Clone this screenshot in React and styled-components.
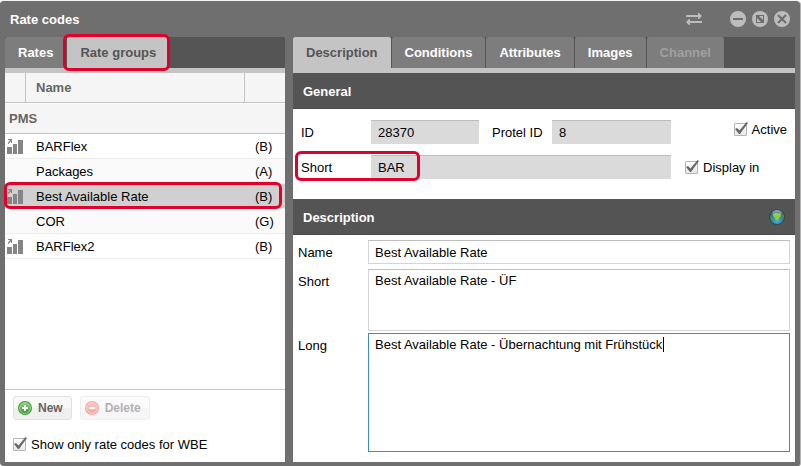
import React, { useEffect, useLayoutEffect, useRef, useState } from 'react'
import styled, { createGlobalStyle, css } from 'styled-components'

const groups = [
  { name: 'BARFlex', type: 'B', chart: true },
  { name: 'Packages', type: 'A' },
  { name: 'Best Available Rate', type: 'B', chart: true, marked: true },
  { name: 'COR', type: 'G' },
  { name: 'BARFlex2', type: 'B', chart: true }
]

const detailTabs = [
  { title: 'Description' },
  { title: 'Conditions' },
  { title: 'Attributes' },
  { title: 'Images' },
  { title: 'Channel', disabled: true }
]

const GlobalStyle = createGlobalStyle`
  *, *::before, *::after {
    box-sizing: border-box;
  }

  body {
    margin: 0;
    background: #fff;
    color: #000;
    font: 13px/19px "Liberation Sans", Arial, sans-serif;
  }

  button, input, textarea {
    font: inherit;
    color: inherit;
  }
`

/* red frame drawn over an element */
const markerFrame = css`
  content: '';
  position: absolute;
  border: 3px solid #e2002b;
  border-radius: 6px;
  pointer-events: none;
  z-index: 1;
`

const Window = styled.main`
  display: flex;
  flex-direction: column;
  min-height: 100vh;
  padding: 0 5px 4px;
  border-top: 1px solid #f4f4f4;
  border-right: 1px solid #b4b4b4;
  border-radius: 4px 5px 3px 4px;
  background: #6f6f6f;
`

const TitleBar = styled.header`
  display: flex;
  align-items: center;
  height: 36px;
  padding: 0 5px;
`

const Title = styled.h1`
  flex: 1;
  margin: 0;
  color: #fff;
  font-size: 13px;
`

const WindowButtons = styled.div`
  display: flex;
  align-items: center;
  gap: 6px;
`

const IconButton = styled.button`
  display: flex;
  padding: 0;
  border: 0;
  background: none;
  margin-right: ${({ $spaced }) => ($spaced ? '22px' : '0')};
`

const Columns = styled.div`
  flex: 1;
  display: grid;
  grid-template-columns: minmax(240px, 280fr) minmax(440px, 502fr);
  gap: 8px;
`

const Panel = styled.section`
  display: flex;
  flex-direction: column;
  background: #fff;
`

const Tabs = styled.div`
  display: flex;
  gap: 1px;
  height: 36px;
  border-bottom: 5px solid #c4c4c4;
  background: #555;
`

const Tab = styled.button`
  padding: 0 13px;
  border: 0;
  border-radius: 2px 2px 0 0;
  background: ${({ $active }) => ($active ? '#c4c4c4' : '#7d7d7d')};
  color: ${({ $active }) => ($active ? '#555' : '#fff')};
  font-weight: bold;

  &:disabled {
    color: #a0a0a0;
  }

  ${({ $marked }) => $marked && css`
    position: relative;

    &::after {
      ${markerFrame}
      inset: -3px -1px -3px -4px;
    }
  `}
`

const ListArea = styled.div`
  flex: 1;
`

const Table = styled.table`
  width: 100%;
  border-collapse: separate;
  border-spacing: 0;
  table-layout: fixed;
`

const HeadCell = styled.th`
  width: ${({ $width }) => $width || 'auto'};
  height: 30px;
  padding: 0 10px;
  border-right: ${({ $last }) => ($last ? '0' : '1px solid #c4c4c4')};
  border-bottom: 1px solid #c4c4c4;
  background: #f5f5f5;
  color: #666;
  text-align: left;
`

const GroupCell = styled.th`
  height: 31px;
  padding: 0 4px;
  border-top: 1px solid #fff;
  border-bottom: 1px solid #c4c4c4;
  background: #f5f5f5;
  color: #666;
  text-align: left;
`

const Cell = styled.td`
  height: 25px;
  padding: ${({ $icon }) => ($icon ? '0 2px' : '1px 10px 0')};
  border-bottom: 1px solid #ededed;
  white-space: nowrap;

  svg {
    display: block;
  }
`

const Row = styled.tr`
  background: ${({ $selected }) => ($selected ? '#d0d0d0' : '#fff')};

  &:nth-child(odd) {
    background: ${({ $selected }) => ($selected ? '#d0d0d0' : '#fafafa')};
  }

  ${({ $marked }) => $marked && css`
    position: relative;

    ${Cell}:first-child::after {
      ${markerFrame}
      inset: -2px 3px 0 -1px;
    }
  `}
`

const ListFooter = styled.footer`
  padding: 6px 8px 8px;
  border-top: 1px solid #c4c4c4;
`

const Toolbar = styled.div`
  display: flex;
  gap: 8px;
  margin-bottom: 15px;
`

const ToolButton = styled.button`
  display: flex;
  align-items: center;
  gap: 6px;
  height: 24px;
  padding: 0 8px 0 4px;
  border: 1px solid #e0e0e0;
  border-radius: 3px;
  background: linear-gradient(#f8f8f8 50%, #efefef 50%);
  color: #666;
  font-size: 12px;
  font-weight: bold;

  &:disabled {
    opacity: 0.5;
  }
`

const CheckLabel = styled.label`
  display: flex;
  align-items: center;
  gap: 5px;
`

const CheckWrap = styled.span`
  position: relative;
  display: flex;

  svg {
    position: absolute;
    top: -1px;
    left: 0;
    display: none;
    pointer-events: none;
  }

  input:checked + svg {
    display: block;
  }
`

const CheckInput = styled.input`
  appearance: none;
  width: 13px;
  height: 13px;
  margin: 0;
  border: 1px solid #b5b5b5;
  border-radius: 1px;
  background: linear-gradient(#fff, #e8e8e8);
`

const SectionBar = styled.h2`
  display: flex;
  align-items: center;
  justify-content: space-between;
  height: 36px;
  margin: 0;
  padding: 0 10px;
  background: #545454;
  box-shadow: inset 0 -1px #4a4a4a;
  color: #fff;
  font-size: 13px;
`

const GeneralForm = styled.div`
  display: grid;
  grid-template-columns: 70px minmax(0, 108fr) 73px minmax(0, 119fr) 124px;
  row-gap: 11px;
  padding: 11px 0 20px 8px;
`

const GeneralLabel = styled.label`
  height: 24px;
  line-height: 25px;
  padding-left: ${({ $indent }) => ($indent ? '13px' : '0')};

  ${({ $marked }) => $marked && css`
    position: relative;

    &::after {
      ${markerFrame}
      inset: -4px -49px -2px -6px;
    }
  `}
`

const ReadOnlyInput = styled.input`
  grid-column: ${({ $wide }) => ($wide ? 'span 3' : 'auto')};
  width: 100%;
  height: 24px;
  padding: 0 7px;
  border: 0;
  border-top: 1px solid #bdbdbd;
  border-radius: 0;
  background: #dadada;
  outline: 0;
`

const CheckCell = styled.div`
  justify-self: ${({ $end }) => ($end ? 'end' : 'start')};
  align-self: ${({ $end }) => ($end ? 'start' : 'center')};
  padding: 0 8px 0 14px;
`

const TextForm = styled.div`
  flex: 1;
  display: grid;
  grid-template-columns: 70px 1fr;
  grid-template-rows: 29px 64px 1fr;
  padding: 5px 5px 10px;
`

const TextLabel = styled.label`
  line-height: 25px;
`

const field = css`
  display: block;
  width: 100%;
  border: 1px solid #d5d5d5;
  border-top-color: #bdbdbd;
  border-radius: 0;
  background: #fff;
  outline: 0;

  &:focus {
    border-color: #3b8bc4;
  }
`

const TextInput = styled.input`
  ${field}
  height: 24px;
  padding: 0 6px;
`

const TextArea = styled.textarea`
  ${field}
  height: ${({ $tall }) => ($tall ? '100%' : '62px')};
  min-height: ${({ $tall }) => ($tall ? '119px' : '0')};
  padding: 1px 6px;
  resize: none;
  caret-color: ${({ $ownCaret }) => ($ownCaret ? 'transparent' : 'auto')};
`

const AreaWrap = styled.div`
  position: relative;
`

const Caret = styled.span`
  position: absolute;
  top: 4px;
  width: 1px;
  height: 15px;
  background: #000;
`

const ChartIcon = () => (
  <svg width="16" height="15" viewBox="0 0 16 15" fill="#858585" aria-hidden="true">
    <path d="M0 8h5v7H0zM6 5h4v10H6zM11 1h5v14h-5z" />
    <path d="M1 0h4v4H4V2.200L1.600 5 .6 4.200 3 1H1z" />
  </svg>
)

const SwapIcon = () => (
  <svg width="16" height="12" viewBox="0 0 16 12" fill="#bcbcbc" aria-hidden="true">
    <path d="M0 2h12V0h1l3 3-3 3h-1V4H0zM16 8H4V6H3L0 9l3 3h1v-2h12z" />
  </svg>
)

const RoundIcon = ({ children }) => (
  <svg width="16" height="16" viewBox="0 0 16 16" fill="none" stroke="#6c6c6c" strokeWidth="2" aria-hidden="true">
    <circle cx="8" cy="8" r="8" fill="#bcbcbc" stroke="none" />
    {children}
  </svg>
)

const CircleIcon = ({ id, light, dark, plus }) => (
  <svg width="14" height="14" viewBox="0 0 14 14" aria-hidden="true">
    <defs>
      <linearGradient id={id} x1="0" y1="0" x2="0" y2="1">
        <stop offset="0" stopColor={light} />
        <stop offset="1" stopColor={dark} />
      </linearGradient>
    </defs>
    <circle cx="7" cy="7" r="7" fill={dark} />
    <circle cx="7" cy="7" r="5.500" fill={`url(#${id})`} stroke="#fff" strokeOpacity="0.45" />
    <path d={plus ? 'M7 4v6M4 7h6' : 'M4 7h6'} stroke="#fff" strokeWidth="2" />
  </svg>
)

const GlobeIcon = () => (
  <svg width="16" height="16" viewBox="0 0 16 16" aria-hidden="true">
    <defs>
      <radialGradient id="sea" cx="0.5" cy="0.75" r="0.7">
        <stop offset="0" stopColor="#48b0dc" />
        <stop offset="0.6" stopColor="#2f7f9e" />
        <stop offset="1" stopColor="#2f555a" />
      </radialGradient>
      <linearGradient id="shine" x1="0" y1="0" x2="0" y2="1">
        <stop offset="0" stopColor="#fff" stopOpacity="0.5" />
        <stop offset="1" stopColor="#fff" stopOpacity="0" />
      </linearGradient>
    </defs>
    <circle cx="8" cy="8" r="7.500" fill="url(#sea)" stroke="#35484a" />
    <path d="M4 5l3-1 2 1 2-1 1 3-2 2-1 3-2-1-1-2-2-2z" fill="#93c83a" />
    <path d="M1 7l2 1 1 3-1 1zM13 4l2 3-1 3-1-2z" fill="#4f9140" />
    <ellipse cx="8" cy="4" rx="5" ry="3" fill="url(#shine)" />
  </svg>
)

const CheckBox = ({ id, children }) => (
  <CheckLabel htmlFor={id}>
    <CheckWrap>
      <CheckInput type="checkbox" id={id} defaultChecked />
      <svg width="15" height="14" viewBox="0 0 15 14" fill="#686868" aria-hidden="true">
        <path d="M1 7l2-1 2.500 2.500L12.500 0 14 1 6 12H5z" />
      </svg>
    </CheckWrap>
    {children}
  </CheckLabel>
)

const LongText = () => {
  const [text, setText] = useState('Best Available Rate - Übernachtung mit Frühstück')
  const [caretX, setCaretX] = useState(0)
  const area = useRef(null)

  useLayoutEffect(() => {
    const ctx = document.createElement('canvas').getContext('2d')
    ctx.font = window.getComputedStyle(area.current).font
    setCaretX(Math.round(ctx.measureText(text).width) + 7)
  }, [text])

  useEffect(() => {
    area.current.focus()
    area.current.setSelectionRange(text.length, text.length)
  }, [])

  return (
    <AreaWrap>
      <TextArea id="long" ref={area} value={text} onChange={(e) => setText(e.target.value)} spellCheck={false} $tall $ownCaret />
      <Caret style={{ left: caretX }} />
    </AreaWrap>
  )
}

const RateList = () => {
  const [selected, setSelected] = useState('Best Available Rate')

  return (
    <Panel>
      <Tabs role="tablist">
        <Tab role="tab">Rates</Tab>
        <Tab role="tab" aria-selected="true" $active $marked>Rate groups</Tab>
      </Tabs>
      <ListArea>
        <Table>
          <thead>
            <tr>
              <HeadCell $width="20px" />
              <HeadCell>Name</HeadCell>
              <HeadCell $width="40px" $last />
            </tr>
          </thead>
          <tbody>
            <tr>
              <GroupCell colSpan={3}>PMS</GroupCell>
            </tr>
            {
              groups.map((g) => (
                <Row key={g.name} $selected={g.name === selected} $marked={g.marked} onClick={() => setSelected(g.name)}>
                  <Cell $icon>{g.chart ? <ChartIcon /> : null}</Cell>
                  <Cell>{g.name}</Cell>
                  <Cell>({g.type})</Cell>
                </Row>
              ))
            }
          </tbody>
        </Table>
      </ListArea>
      <ListFooter>
        <Toolbar>
          <ToolButton type="button">
            <CircleIcon id="plus" light="#8fd07f" dark="#3c9a34" plus />
            New
          </ToolButton>
          <ToolButton type="button" disabled>
            <CircleIcon id="minus" light="#ff8f80" dark="#e8504a" />
            Delete
          </ToolButton>
        </Toolbar>
        <CheckBox id="wbe">Show only rate codes for WBE</CheckBox>
      </ListFooter>
    </Panel>
  )
}

const RateDetails = () => {
  const [tab, setTab] = useState('Description')

  return (
    <Panel>
      <Tabs role="tablist">
        {
          detailTabs.map((t) => (
            <Tab key={t.title} role="tab" disabled={t.disabled} $active={t.title === tab} onClick={() => setTab(t.title)}>
              {t.title}
            </Tab>
          ))
        }
      </Tabs>
      <SectionBar>General</SectionBar>
      <GeneralForm>
        <GeneralLabel htmlFor="rate-id">ID</GeneralLabel>
        <ReadOnlyInput id="rate-id" readOnly value="28370" />
        <GeneralLabel htmlFor="protel-id" $indent>Protel ID</GeneralLabel>
        <ReadOnlyInput id="protel-id" readOnly value="8" />
        <CheckCell $end><CheckBox id="active">Active</CheckBox></CheckCell>
        <GeneralLabel htmlFor="code" $marked>Short</GeneralLabel>
        <ReadOnlyInput id="code" readOnly value="BAR" $wide />
        <CheckCell><CheckBox id="display">Display in</CheckBox></CheckCell>
      </GeneralForm>
      <SectionBar>
        Description
        <IconButton type="button" aria-label="Languages"><GlobeIcon /></IconButton>
      </SectionBar>
      <TextForm>
        <TextLabel htmlFor="name">Name</TextLabel>
        <TextInput id="name" defaultValue="Best Available Rate" />
        <TextLabel htmlFor="short">Short</TextLabel>
        <TextArea id="short" defaultValue="Best Available Rate - ÜF" spellCheck={false} />
        <TextLabel htmlFor="long">Long</TextLabel>
        <LongText />
      </TextForm>
    </Panel>
  )
}

const App = () => (
  <>
    <GlobalStyle />
    <Window>
      <TitleBar>
        <Title>Rate codes</Title>
        <WindowButtons>
          <IconButton type="button" aria-label="Switch" $spaced><SwapIcon /></IconButton>
          <IconButton type="button" aria-label="Minimize">
            <RoundIcon><path d="M3 8h10" /></RoundIcon>
          </IconButton>
          <IconButton type="button" aria-label="Maximize">
            <RoundIcon>
              <path d="M4 4h8v8H4z" fill="#6c6c6c" stroke="none" />
              <path d="M7 5h4v4zM5 7v4h4z" fill="#bcbcbc" stroke="none" />
            </RoundIcon>
          </IconButton>
          <IconButton type="button" aria-label="Close">
            <RoundIcon><path d="M4 4l8 8M12 4l-8 8" /></RoundIcon>
          </IconButton>
        </WindowButtons>
      </TitleBar>
      <Columns>
        <RateList />
        <RateDetails />
      </Columns>
    </Window>
  </>
)

export default App
